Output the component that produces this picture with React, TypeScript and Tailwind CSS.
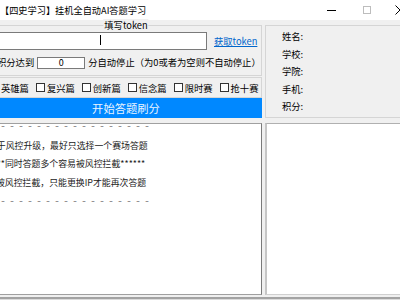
import React from "react";

function Check({ label }: { label: string }) {
  return (
    <div className="flex items-center shrink-0">
      <span className="w-[9px] h-[9px] border border-[#333333] bg-white shrink-0" />
      <span className="ml-[2px] text-[9.3px] leading-[12px] whitespace-nowrap">{label}</span>
    </div>
  );
}

export default function App() {
  return (
    <div className="w-[400px] h-[300px] overflow-hidden bg-[#f0f0f0] flex flex-col text-black font-['Noto_Sans_CJK_SC','Noto_Sans',sans-serif]">
      {/* title bar */}
      <div className="h-[20px] shrink-0 bg-white flex items-center">
        <span className="text-[9.2px] leading-[20px] whitespace-nowrap">【四史学习】挂机全自动AI答题学习</span>
        <div className="ml-auto w-[73px] shrink-0 flex items-center h-full">
          <span className="w-[9px] h-px bg-black shrink-0" />
          <span className="ml-[27px] w-[8px] h-[8px] border border-[#bdbdbd] shrink-0" />
          <svg className="ml-[24px] shrink-0" width="10" height="10" viewBox="0 0 10 10">
            <path d="M0.5 0.5 L9.5 9.5 M9.5 0.5 L0.5 9.5" stroke="#000" strokeWidth="1" fill="none" />
          </svg>
        </div>
      </div>

      {/* top section */}
      <div className="flex mt-[5px] shrink-0">
        <div className="ml-[-10px] w-[272px] shrink-0 flex flex-col">
          <div className="relative h-[51px] border border-[#d5d5d5]">
            <span className="absolute left-1/2 -translate-x-1/2 -top-[7px] bg-[#f0f0f0] px-[1px] text-[9.3px] leading-[12px] whitespace-nowrap">填写token</span>
            <div className="flex items-center mt-[6px] ml-[3px]">
              <div className="relative w-[213px] h-[18px] bg-white border border-[#7a7a7a] shrink-0">
                <span className="absolute left-[105px] top-[2px] w-px h-[10px] bg-black" />
              </div>
              <span className="ml-[7px] text-[9.3px] leading-[12px] text-[#0066cc] underline whitespace-nowrap">获取token</span>
            </div>
            <div className="flex items-center mt-[6px] h-[13px] text-[9.3px] whitespace-nowrap">
              <span className="ml-[6px]">积分达到</span>
              <div className="ml-[3px] w-[48px] h-[12px] bg-white border border-[#7a7a7a] flex items-center justify-center text-[9px] leading-[10px] shrink-0">0</div>
              <span className="ml-[3px]">分自动停止（为0或者为空则不自动停止）</span>
            </div>
          </div>
          <div className="mt-[1px] h-[21px] border border-[#d5d5d5] flex items-center">
            <div className="ml-[-1px] flex items-center gap-[7px]">
              <Check label="英雄篇" />
              <Check label="复兴篇" />
              <Check label="创新篇" />
              <Check label="信念篇" />
              <Check label="限时赛" />
              <Check label="抢十赛" />
            </div>
          </div>
          <div className="h-[20px] bg-[#0088ff] flex items-center justify-center text-[11.3px] leading-[14px] text-[#eaf4ff]">开始答题刷分</div>
        </div>
        <div className="ml-[3px] w-[150px] h-[93px] shrink-0 border border-[#d5d5d5] pl-[16px] pt-[2px] text-[9.3px] leading-[17.6px]">
          <div>姓名:</div>
          <div>学校:</div>
          <div>学院:</div>
          <div>手机:</div>
          <div>积分:</div>
        </div>
      </div>

      {/* bottom section */}
      <div className="flex mt-[5px] h-[172px] shrink-0">
        <div className="ml-[-10px] w-[272px] shrink-0 bg-white border border-[#a0a0a0] border-r-[#7a7a7a] overflow-hidden">
          <div className="-mt-[6px] leading-[18.7px] whitespace-nowrap text-[#222222]">
            <div className="ml-[9px] font-['Liberation_Mono',monospace] text-[10px] tracking-[3px] text-[#8a8a8a]">-----------------</div>
            <div className="ml-[-3px] text-[8.9px]">由于风控升级，最好只选择一个赛场答题</div>
            <div className="ml-[-13px] text-[8.9px]">
              <span className="inline-block w-[27px] text-right">******</span>同时答题多个容易被风控拦截******
            </div>
            <div className="ml-[5px] text-[8.9px]">被风控拦截，只能更换IP才能再次答题</div>
            <div className="ml-[9px] font-['Liberation_Mono',monospace] text-[10px] tracking-[3px] text-[#8a8a8a]">-----------------</div>
          </div>
        </div>
        <div className="ml-[3px] w-[150px] shrink-0 bg-white border-l-2 border-l-[#c6c6c6] border-t border-t-[#b0b0b0] border-b border-b-[#d0d0d0]" />
      </div>
      <div className="mt-[2px] h-[2px] bg-[#a3a3a3] shrink-0" />
      <div className="flex-1 bg-[#dcdcdc]" />
    </div>
  );
}
